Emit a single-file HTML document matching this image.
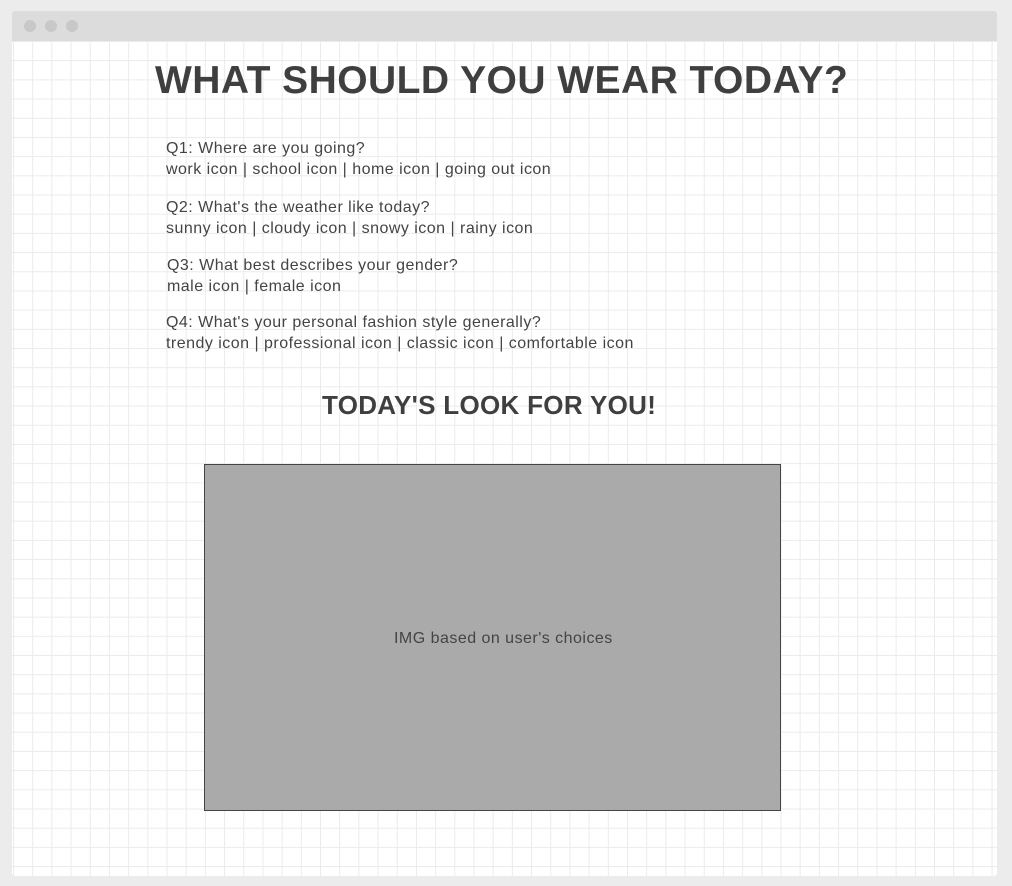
<!DOCTYPE html>
<html><head><style>
body{margin:0;width:1012px;height:886px;background:#ececec;position:relative;overflow:hidden;font-family:"Liberation Sans",sans-serif;color:#444}
.win{position:absolute;left:12px;top:11px;width:985px;height:865px;background:#fff;border-radius:3px;overflow:hidden}
.bar{height:30px;background:#dcdcdc;position:relative}
.dot{position:absolute;top:9px;width:12px;height:12px;border-radius:50%;background:#c8c8c8}
.grid{position:absolute;left:0;top:30px;right:0;bottom:0;
background-image:linear-gradient(#ebebeb 1px,transparent 1px),linear-gradient(90deg,#ebebeb 1px,transparent 1px);
background-size:19.2px 19.2px;background-position:1px 0px}
.t{position:absolute;white-space:nowrap;font-size:16px;line-height:21px;letter-spacing:0.48px}
h1{position:absolute;margin:0;left:155px;top:59px;font-size:39px;letter-spacing:0.45px;font-weight:bold;color:#3f3f3f;white-space:nowrap}
h2{position:absolute;margin:0;left:322px;top:390px;font-size:26px;letter-spacing:0.3px;font-weight:bold;color:#3f3f3f;white-space:nowrap}
.box{position:absolute;left:204px;top:464px;width:575px;height:345px;background:#aaa;border:1px solid #444}
</style></head><body>
<div class="win"><div class="bar"><div class="dot" style="left:12px"></div><div class="dot" style="left:33px"></div><div class="dot" style="left:54px"></div></div><div class="grid"></div></div>
<h1>WHAT SHOULD YOU WEAR TODAY?</h1>
<div class="t" style="left:166px;top:138px">Q1: Where are you going?<br>work icon | school icon | home icon | going out icon</div>
<div class="t" style="left:166px;top:197px">Q2: What's the weather like today?<br>sunny icon | cloudy icon | snowy icon | rainy icon</div>
<div class="t" style="left:167px;top:255px">Q3: What best describes your gender?<br>male icon | female icon</div>
<div class="t" style="left:166px;top:312px">Q4: What's your personal fashion style generally?<br>trendy icon | professional icon | classic icon | comfortable icon</div>
<h2>TODAY'S LOOK FOR YOU!</h2>
<div class="box"></div>
<div class="t" style="left:394px;top:628px">IMG based on user's choices</div>
</body></html>
